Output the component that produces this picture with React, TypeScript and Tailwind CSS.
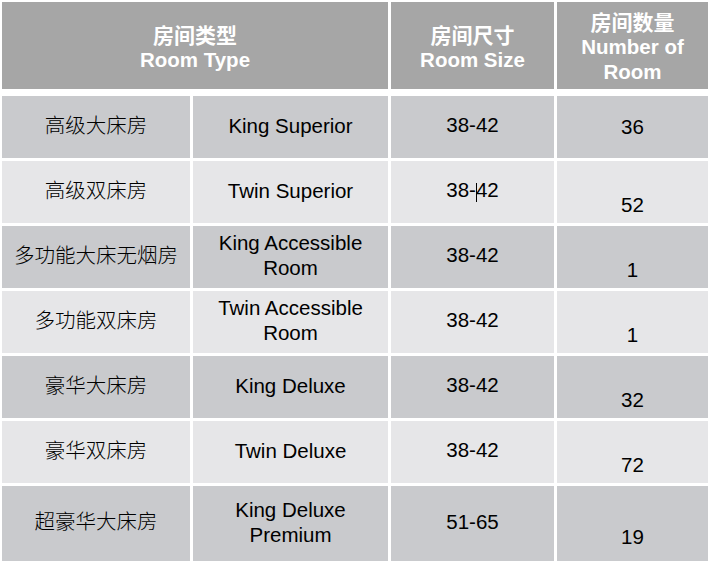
import React from "react";

const latin = "font-['Liberation_Sans','Arial','Noto_Sans_CJK_SC',sans-serif]";
const cjk = "font-['Noto_Sans_CJK_SC','Liberation_Sans',sans-serif]";

type Row = {
  zh: string;
  en: string[];
  size: React.ReactNode;
  num: string;
  low: boolean;
};

const rows: Row[] = [
  { zh: "高级大床房", en: ["King Superior"], size: "38-42", num: "36", low: false },
  {
    zh: "高级双床房",
    en: ["Twin Superior"],
    size: (
      <>
        38-
        <span className="inline-block w-px h-[19px] bg-black -mr-px align-[-5px]" />
        42
      </>
    ),
    num: "52",
    low: true,
  },
  { zh: "多功能大床无烟房", en: ["King Accessible", "Room"], size: "38-42", num: "1", low: true },
  { zh: "多功能双床房", en: ["Twin Accessible", "Room"], size: "38-42", num: "1", low: true },
  { zh: "豪华大床房", en: ["King Deluxe"], size: "38-42", num: "32", low: true },
  { zh: "豪华双床房", en: ["Twin Deluxe"], size: "38-42", num: "72", low: true },
  { zh: "超豪华大床房", en: ["King Deluxe", "Premium"], size: "51-65", num: "19", low: true },
];

export default function App() {
  return (
    <div className={`w-[710px] h-[561px] overflow-hidden bg-white pl-[2px] pt-[2px] ${latin}`}>
      {/* Header */}
      <div className="grid grid-cols-[386px_163px_151px] gap-x-[3px] h-[87px] text-white font-bold text-[20.5px] leading-[25px]">
        <div className="bg-[#a6a6a6] flex flex-col items-center justify-center pt-[3px]">
          <div className={`${cjk} text-[21px]`}>房间类型</div>
          <div>Room Type</div>
        </div>
        <div className="bg-[#a6a6a6] flex flex-col items-center justify-center pt-[3px]">
          <div className={`${cjk} text-[21px]`}>房间尺寸</div>
          <div>Room Size</div>
        </div>
        <div className="bg-[#a6a6a6] flex flex-col items-center justify-center pt-[1px]">
          <div className={`${cjk} text-[21px]`}>房间数量</div>
          <div>Number of</div>
          <div>Room</div>
        </div>
      </div>

      {/* Body */}
      <div className="mt-[7px] grid grid-cols-[188px_195px_163px_151px] grid-rows-[62px_62px_62px_62px_62px_62px_80px] gap-x-[3px] gap-y-[3px] text-[20.5px] leading-[25px] text-black">
        {rows.map((r, i) => {
          const bg = i % 2 === 0 ? "bg-[#c9cacd]" : "bg-[#e6e6e8]";
          const last = i === rows.length - 1;
          return (
            <React.Fragment key={i}>
              <div className={`${bg} flex items-center justify-center ${last ? "pb-[12px]" : "pb-[5px]"}`}>
                <span className={`${cjk} font-light text-[20.5px]`}>{r.zh}</span>
              </div>
              <div className={`${bg} flex flex-col items-center justify-center text-center ${last ? "pb-[8px]" : "pb-[4px]"}`}>
                {r.en.map((l, j) => (
                  <div key={j}>{l}</div>
                ))}
              </div>
              <div className={`${bg} flex items-center justify-center ${last ? "pb-[10px]" : "pb-[5px]"}`}>
                <span>{r.size}</span>
              </div>
              <div className={`${bg} flex flex-col items-center justify-center ${last ? "pb-[4px]" : "pb-[1px]"}`}>
                {r.low && <div>&nbsp;</div>}
                <div>{r.num}</div>
              </div>
            </React.Fragment>
          );
        })}
      </div>
    </div>
  );
}
